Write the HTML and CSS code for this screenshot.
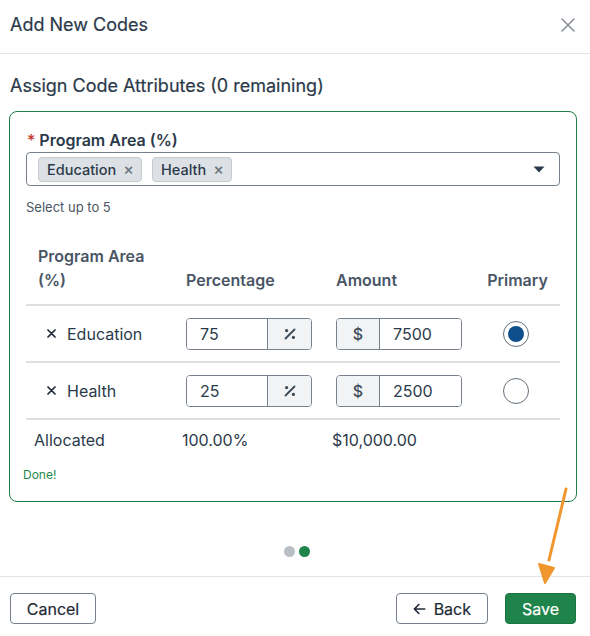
FILE: index.html
```html
<!DOCTYPE html>
<html lang="en">
<head>
<meta charset="utf-8">
<title>Add New Codes</title>
<link rel="stylesheet" href="styles.css">
</head>
<body>
<div class="modal">
  <header class="modal-header">
    <h1 class="modal-title">Add New Codes</h1>
    <button class="close-btn" aria-label="Close">
      <svg width="14" height="14" viewBox="0 0 14 14"><path d="M1 1L13 13M13 1L1 13" stroke="#8a9199" stroke-width="1.6" stroke-linecap="round"/></svg>
    </button>
  </header>

  <main class="modal-body">
    <h2 class="subtitle">Assign Code Attributes (0 remaining)</h2>

    <section class="card">
      <label class="field-label"><span class="req">*</span> Program Area (%)</label>
      <div class="select">
        <div class="tags">
          <span class="tag">Education <span class="tag-x">×</span></span>
          <span class="tag">Health <span class="tag-x">×</span></span>
        </div>
        <svg class="caret" width="12" height="7" viewBox="0 0 12 7"><path d="M0.5 0.5H11.5L6 6.5Z" fill="#2b3a4a"/></svg>
      </div>
      <div class="hint">Select up to 5</div>

      <div class="table">
        <div class="trow thead">
          <div class="cell">Program Area<br>(%)</div>
          <div class="cell">Percentage</div>
          <div class="cell">Amount</div>
          <div class="cell center">Primary</div>
        </div>

        <div class="trow tbody">
          <div class="cell name"><span class="rm">
            <svg width="9" height="9" viewBox="0 0 9 9"><path d="M1 1L8 8M8 1L1 8" stroke="#1f2a36" stroke-width="1.7" stroke-linecap="round"/></svg>
          </span>Education</div>
          <div class="cell">
            <div class="igroup">
              <span class="ival w80">75</span>
              <span class="iaddon pct"><svg width="12" height="12" viewBox="0 0 12 12"><path d="M10.5 1.5L1.5 10.5" stroke="#3d4a57" stroke-width="1.8" stroke-linecap="round"/><circle cx="2.6" cy="2.6" r="1.6" fill="#3d4a57"/><circle cx="9.4" cy="9.4" r="1.6" fill="#3d4a57"/></svg></span>
            </div>
          </div>
          <div class="cell">
            <div class="igroup">
              <span class="iaddon dollar">$</span>
              <span class="ival w82">7500</span>
            </div>
          </div>
          <div class="cell center"><span class="radio checked"></span></div>
        </div>

        <div class="trow tbody">
          <div class="cell name"><span class="rm">
            <svg width="9" height="9" viewBox="0 0 9 9"><path d="M1 1L8 8M8 1L1 8" stroke="#1f2a36" stroke-width="1.7" stroke-linecap="round"/></svg>
          </span>Health</div>
          <div class="cell">
            <div class="igroup">
              <span class="ival w80">25</span>
              <span class="iaddon pct"><svg width="12" height="12" viewBox="0 0 12 12"><path d="M10.5 1.5L1.5 10.5" stroke="#3d4a57" stroke-width="1.8" stroke-linecap="round"/><circle cx="2.6" cy="2.6" r="1.6" fill="#3d4a57"/><circle cx="9.4" cy="9.4" r="1.6" fill="#3d4a57"/></svg></span>
            </div>
          </div>
          <div class="cell">
            <div class="igroup">
              <span class="iaddon dollar">$</span>
              <span class="ival w82">2500</span>
            </div>
          </div>
          <div class="cell center"><span class="radio"></span></div>
        </div>

        <div class="trow tfoot">
          <div class="cell">Allocated</div>
          <div class="cell">100.00%</div>
          <div class="cell">$10,000.00</div>
          <div class="cell"></div>
        </div>
      </div>

      <div class="done">Done!</div>
    </section>

    <div class="dots">
      <span class="dot"></span>
      <span class="dot active"></span>
    </div>
  </main>

  <footer class="modal-footer">
    <button class="btn cancel">Cancel</button>
    <div class="right-btns">
      <button class="btn back">
        <svg width="14" height="12" viewBox="0 0 14 12"><path d="M13 6H1.5M6.5 1L1.5 6L6.5 11" stroke="#1f2a36" stroke-width="1.8" fill="none" stroke-linecap="round" stroke-linejoin="round"/></svg>
        Back
      </button>
      <button class="btn primary">Save</button>
    </div>
  </footer>

  <svg class="annot-arrow" width="40" height="110" viewBox="0 0 40 110">
    <path d="M34 9L17 80" stroke="#f0962e" stroke-width="3" stroke-linecap="round"/>
    <path d="M7 84L22 88L13 103Z" fill="#f0962e" stroke="#f0962e" stroke-width="2" stroke-linejoin="round"/>
  </svg>
</div>
</body>
</html>
```

FILE: styles.css
```css
* { box-sizing: border-box; }
html, body { margin: 0; padding: 0; background: #fff; }
body {
  font-family: Inter, "Noto Sans", "Liberation Sans", sans-serif;
  color: #2b3a4a;
  width: 590px;
  height: 636px;
  overflow: hidden;
}
.modal { position: relative; width: 590px; height: 636px; display: flex; flex-direction: column; }

.modal-header {
  height: 54px;
  display: flex;
  align-items: center;
  justify-content: space-between;
  padding: 0 15px 4px 10px;
  border-bottom: 1px solid #e2e4e6;
}
.modal-title { margin: 0; font-size: 18px; font-weight: 400; color: #2b3a4a; -webkit-text-stroke: 0.2px #2b3a4a; }
.close-btn { background: none; border: 0; padding: 0; display: flex; cursor: pointer; }

.modal-body { padding: 0 13px 0 9px; flex: 1; }
.subtitle { margin: 20px 0 13px 1px; font-size: 18px; font-weight: 400; line-height: 24px; color: #2b3a4a; -webkit-text-stroke: 0.2px #2b3a4a; }

.card {
  border: 1px solid #1f7e46;
  border-radius: 8px;
  padding: 16px 16px 18px 16px;
}
.field-label { display: block; font-size: 16px; font-weight: 600; line-height: 24px; padding-left: 1px; color: #2b3a4a; }
.req { color: #c0392b; font-weight: 500; }

.select {
  height: 34px;
  border: 1px solid #76818c;
  border-radius: 4px;
  display: flex;
  align-items: center;
  justify-content: space-between;
  padding: 0 14px 0 11px;
}
.tags { display: flex; gap: 10px; }
.tag {
  display: inline-flex;
  align-items: center;
  height: 25px;
  padding: 0 7px 0 8px;
  background: #dde1e5;
  border: 1px solid #c5cad0;
  border-radius: 4px;
  font-size: 14.5px;
  font-weight: 500;
  color: #2b3a4a;
}
.tag-x { color: #6b7580; margin-left: 7px; font-size: 16px; line-height: 1; }
.caret { margin-top: 1px; }

.hint { font-size: 13px; line-height: 18px; margin-top: 12px; color: #4a5664; }

.table { margin-top: 28px; }
.trow { display: grid; grid-template-columns: 148px 150px 151px 1fr; }
.cell { padding: 0 12px; font-size: 16px; line-height: 24px; }
.cell.center { text-align: center; display: flex; justify-content: center; align-items: center; }
.thead { border-bottom: 2px solid #dde0e3; padding-bottom: 12px; align-items: end; }
.thead .cell { font-weight: 600; color: #4a5565; }
.tbody { border-bottom: 2px solid #dde0e3; height: 57px; align-items: center; padding-top: 0; }
.tbody .cell.name { display: flex; align-items: center; color: #2b3a4a; }
.rm { display: inline-flex; margin: 0 11px 0 9px; }

.igroup { display: flex; height: 32px; border: 1px solid #76818c; border-radius: 4px; overflow: hidden; width: 126px; }
.ival { display: flex; align-items: center; padding-left: 13px; font-size: 16px; color: #2b3a4a; background: #fff; }
.w80 { width: 80px; }
.w82 { flex: 1; }
.iaddon { display: flex; align-items: center; justify-content: center; background: #f1f3f4; }
.iaddon.pct { flex: 1; border-left: 1px solid #76818c; }
.iaddon.dollar { width: 43px; border-right: 1px solid #76818c; font-size: 16px; font-weight: 500; color: #3d4a57; }

.radio {
  width: 26px; height: 26px;
  border-radius: 50%;
  border: 1px solid #65707b;
  background: #fff;
  display: inline-block;
  position: relative;
  margin-right: 3px;
}
.radio.checked::after {
  content: "";
  position: absolute;
  inset: 4px;
  border-radius: 50%;
  background: #0d4f8b;
}

.tfoot { padding-top: 8px; }
.tfoot .cell { padding-left: 8px; color: #2b3a4a; }

.done { font-size: 12px; line-height: 16px; color: #1f8a4c; margin: 15px 0 0 -3px; }

.dots { display: flex; justify-content: center; gap: 4px; margin-top: 44px; padding-left: 8px; }
.dot { width: 11px; height: 11px; border-radius: 50%; background: #b9bfc5; }
.dot.active { background: #1e8449; }

.modal-footer {
  border-top: 1px solid #e2e4e6;
  padding: 16px 14px 12px 10px;
  display: flex;
  justify-content: space-between;
  align-items: center;
}
.right-btns { display: flex; gap: 17px; }
.btn {
  height: 31px;
  font-family: inherit;
  font-size: 16px;
  font-weight: 400;
  color: #1f2a36;
  background: #fff;
  border: 1px solid #76818c;
  border-radius: 4px;
  padding: 0 16px;
  display: inline-flex;
  align-items: center;
  gap: 8px;
  -webkit-text-stroke: 0.2px currentColor;
}
.btn.cancel { width: 86px; justify-content: center; }
.btn.back { width: 92px; justify-content: center; }
.btn.primary { width: 71px; justify-content: center; background: #1e8449; border-color: #1a7540; color: #fff; }

.annot-arrow { position: absolute; left: 532px; top: 480px; }
```
